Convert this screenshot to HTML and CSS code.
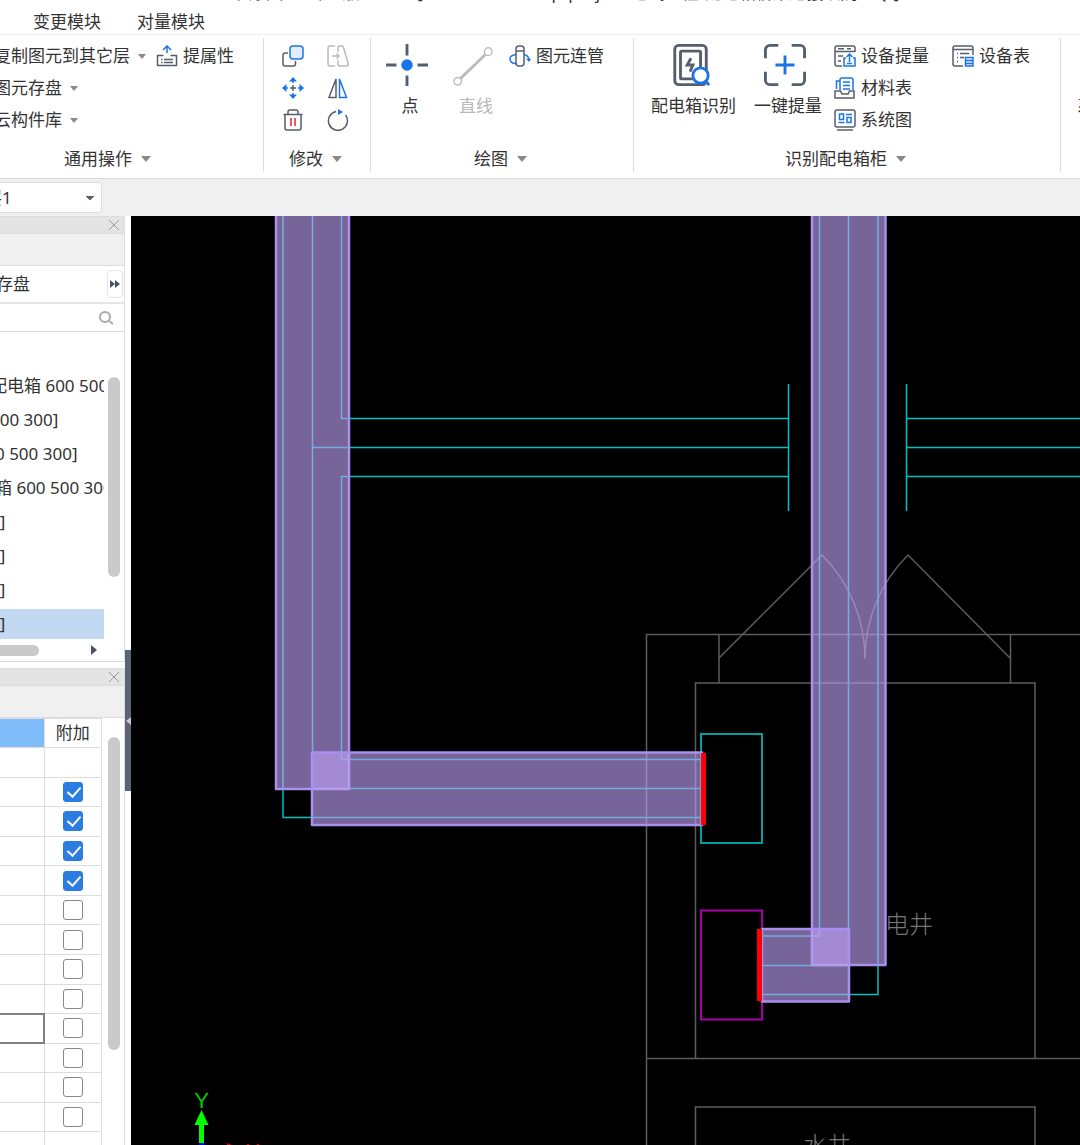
FILE: index.html
```html
<!DOCTYPE html>
<html lang="zh-CN">
  <head>
    <meta charset="UTF-8" />
    <meta name="viewport" content="width=device-width, initial-scale=1.0" />
    <title>安装计量</title>
    <link rel="stylesheet" href="styles.css">
  </head>
  <body>
    <header class="menubar">
      <div class="window-title">安装计量 专业版 2021 - [C:\Users\Desktop\project\电气工程\配电箱桥架连接识别.GQI]</div>
      <nav class="menu">
        <button>变更模块</button>
        <button>对量模块</button>
      </nav>
    </header>

    <div class="ribbon">
      <section class="group group-common">
        <div class="tools">
          <div class="tool-col col-cut">
            <button class="tool">复制图元到其它层<i class="caret"></i></button>
            <button class="tool">图元存盘<i class="caret"></i></button>
            <button class="tool">云构件库<i class="caret"></i></button>
          </div>
          <div class="tool-col">
            <button class="tool">
              <svg class="icon" viewBox="0 0 22 22">
                <path class="ink" d="M7.500 10.500H1.500v10h19v-10h-6M5 14.500h1.500M5 17.500h1.500M8 14.500h9M8 17.500h9" />
                <path class="blue" d="M11 8V1.500M7 5 11 1l4 4" />
              </svg>
              提属性
            </button>
          </div>
        </div>
        <button class="group-name">通用操作<i class="caret big"></i></button>
      </section>

      <section class="group group-edit">
        <div class="tools edit-grid">
          <button class="tool" aria-label="复制">
            <svg class="icon" viewBox="0 0 22 22">
              <path class="ink" d="M6 8H3a2 2 0 0 0-2 2v9a2 2 0 0 0 2 2h8.500a2 2 0 0 0 2-2v-3" />
              <rect class="blue soft" x="8" y="1" width="13" height="13" rx="3" />
            </svg>
          </button>
          <button class="tool" aria-label="延伸">
            <svg class="icon" viewBox="0 0 22 22">
              <path class="dim" d="M8 1H3a2 2 0 0 0-2 2v16a2 2 0 0 0 2 2h5M5 11h7M9.500 8.500 12 11l-2.500 2.500M11 7V3a2 2 0 0 1 2-2h1.500a2 2 0 0 1 2 1.500L21 18a2 2 0 0 1-2 3h-6a2 2 0 0 1-2-2v-4" />
            </svg>
          </button>
          <button class="tool" aria-label="移动">
            <svg class="icon" viewBox="0 0 22 22">
              <path class="ink" d="M11 8v6M8 11h6" />
              <path class="blue" d="M11 1.500V6M11 16v4.500M1.500 11H6M16 11h4.500" />
              <path class="blue fill" d="M11 0 7 4.500h8zM11 22l-4-4.500h8zM0 11l4.500-4v8zM22 11l-4.500-4v8z" />
            </svg>
          </button>
          <button class="tool" aria-label="镜像">
            <svg class="icon" viewBox="0 0 22 22">
              <path class="ink" d="M9 2v18.500H2z" />
              <path class="blue" d="M12.500 2v18.500h7z" />
            </svg>
          </button>
          <button class="tool" aria-label="删除">
            <svg class="icon" viewBox="0 0 22 22">
              <path class="ink" d="M1.500 5.500h19M3 6v13a2 2 0 0 0 2 2h12a2 2 0 0 0 2-2V6M6 5V3a2 2 0 0 1 2-2h6a2 2 0 0 1 2 2v2" />
              <path class="red" d="M9 9v8M13 9v8" />
            </svg>
          </button>
          <button class="tool" aria-label="旋转">
            <svg class="icon" viewBox="0 0 22 22">
              <path class="ink" d="M9 2.500A9.500 9.500 0 1 0 18.500 6" />
              <path class="blue fill" d="M11 0l5 3-5 3z" />
            </svg>
          </button>
        </div>
        <button class="group-name">修改<i class="caret big"></i></button>
      </section>

      <section class="group group-draw">
        <div class="tools">
          <button class="tool-big">
            <svg class="icon-big" viewBox="0 0 44 44">
              <path class="ink thick" d="M22 0v12M22 33v11M0 22h11M33 22h11" />
              <circle cx="22" cy="22" r="6" fill="#1b74e8" />
            </svg>
            点
          </button>
          <button class="tool-big" disabled>
            <svg class="icon-big" viewBox="0 0 44 44">
              <path class="dim thick" d="M9 36 35 11" />
              <circle class="dim" cx="6" cy="39" r="4" />
              <circle class="dim" cx="38" cy="8" r="4" />
            </svg>
            直线
          </button>
          <div class="tool-col">
            <button class="tool">
              <svg class="icon" viewBox="0 0 22 22">
                <path class="blue" d="M7 9.500C3 10 1 11.500 1 14s2 5 7 4.500M15 9.500c3 .5 4.500 2 5 5" />
                <path class="blue fill" d="M17 13.500l5 .5-2 3z" />
                <rect class="ink paper" x="7" y="1" width="8" height="20" rx="3" />
                <path class="ink" d="M7 6h8" />
              </svg>
              图元连管
            </button>
          </div>
        </div>
        <button class="group-name">绘图<i class="caret big"></i></button>
      </section>

      <section class="group group-detect">
        <div class="tools">
          <button class="tool-big">
            <svg class="icon-big" viewBox="0 0 44 44">
              <rect class="ink thick" x="5" y="1.500" width="33" height="41" rx="4" />
              <rect class="ink thick" x="11" y="7.500" width="21" height="29" rx="1" />
              <path class="ink thick" d="m22 15-4 7h6l-3 7" />
              <circle class="blue thick paper" cx="32" cy="33" r="8" />
              <path class="blue thick" d="m37 38 4 5" />
            </svg>
            配电箱识别
          </button>
          <button class="tool-big">
            <svg class="icon-big" viewBox="0 0 44 44">
              <path class="ink thick" d="M1.500 15V6A4.500 4.500 0 0 1 6 1.500h9M29 1.500h9A4.500 4.500 0 0 1 42.500 6v9M42.500 29v9a4.500 4.500 0 0 1-4.500 4.500h-9M15 42.500H6A4.500 4.500 0 0 1 1.500 38v-9" />
              <path class="blue thick" d="M22 12v20M12 22h20" />
            </svg>
            一键提量
          </button>
          <div class="tool-col">
            <button class="tool">
              <svg class="icon" viewBox="0 0 22 22">
                <path class="ink" d="M8 21H3a2 2 0 0 1-2-2V3a2 2 0 0 1 2-2h16a2 2 0 0 1 2 2v4M1 6.500h20M4 3.800h6M13 3.800h4M4 11h5M4 16h3" />
                <path class="blue" d="M12 13h-2v8h11v-8h-2M15.500 17V9M12.500 12l3-3 3 3M13 18.500h5" />
              </svg>
              设备提量
            </button>
            <button class="tool">
              <svg class="icon" viewBox="0 0 22 22">
                <path class="blue" d="M2.500 12V4H6M6 13V3a2 2 0 0 1 2-2h9a2 2 0 0 1 2 2v10M9 5h7M9 8.500h7M9 12h7" />
                <path class="ink" d="M1 14h5.500l1.500 3h6l1.500-3H20v7H1z" />
              </svg>
              材料表
            </button>
            <button class="tool">
              <svg class="icon" viewBox="0 0 22 22">
                <rect class="ink" x="1" y="1" width="20" height="17" rx="2" />
                <path class="ink" d="M3 21h16" />
                <path class="blue" d="M5.500 5h4v5.500h-4zM13 8.500h4v5h-4zM4.500 13.500h6M12 5.500h6" />
              </svg>
              系统图
            </button>
          </div>
          <div class="tool-col">
            <button class="tool">
              <svg class="icon" viewBox="0 0 22 22">
                <path class="ink" d="M11 21H3a2 2 0 0 1-2-2V3a2 2 0 0 1 2-2h16a2 2 0 0 1 2 2v7M1 4.500h20M5 8.500h1M8 8.500h9M5 12.500h1M8 12.500h4M5 16.500h1" />
                <path class="blue soft" d="M13.500 12.500h7.500v8.500h-7.500zM13.500 15.500h7M13.500 18.500h7" />
              </svg>
              设备表
            </button>
          </div>
        </div>
        <button class="group-name">识别配电箱柜<i class="caret big"></i></button>
      </section>

      <section class="group group-next">
        <div class="tools">
          <button class="tool-big">
            <svg class="icon-big" viewBox="0 0 44 44"></svg>
            系统
          </button>
        </div>
      </section>
    </div>

    <div class="floorbar">
      <select class="floor" aria-label="楼层">
        <option>层1</option>
      </select>
    </div>

    <main class="workspace">
      <aside class="side">
        <section class="panel panel-parts">
          <div class="panel-head"><button class="close" aria-label="关闭">
            <svg viewBox="0 0 10 10"><path d="M0 0l10 10M10 0 0 10" /></svg>
          </button></div>
          <div class="panel-tabs"></div>
          <div class="panel-tools">
            <button class="save">存盘</button>
            <button class="more" aria-label="更多">
              <svg viewBox="0 0 10 8"><path d="M0 0l5 4-5 4zM5 0l5 4-5 4z" /></svg>
            </button>
          </div>
          <div class="search">
            <input type="text" aria-label="搜索" />
            <svg viewBox="0 0 14 14"><circle cx="6" cy="6" r="5" /><path d="m10 10 4 3" /></svg>
          </div>
          <div class="list-area">
            <ul class="list">
              <li>配电箱 600 500 300]</li>
              <li>500 300]</li>
              <li class="near">0 500 300]</li>
              <li class="near">箱 600 500 300]</li>
              <li>0]</li>
              <li>0]</li>
              <li>0]</li>
              <li class="selected">0]</li>
            </ul>
            <div class="list-scroll"><div class="thumb"></div></div>
          </div>
          <div class="h-scroll">
            <div class="h-thumb"></div>
            <i class="h-arrow"></i>
          </div>
        </section>

        <section class="panel panel-props">
          <div class="panel-head"><button class="close" aria-label="关闭">
            <svg viewBox="0 0 10 10"><path d="M0 0l10 10M10 0 0 10" /></svg>
          </button></div>
          <div class="panel-tabs"></div>
          <div class="props-body">
            <table class="props">
              <thead>
                <tr><th class="value-head"></th><th>附加</th></tr>
              </thead>
              <tbody>
                <tr><td></td><td></td></tr>
                <tr><td></td><td><input type="checkbox" aria-label="附加 1" checked /></td></tr>
                <tr><td></td><td><input type="checkbox" aria-label="附加 2" checked /></td></tr>
                <tr><td></td><td><input type="checkbox" aria-label="附加 3" checked /></td></tr>
                <tr><td></td><td><input type="checkbox" aria-label="附加 4" checked /></td></tr>
                <tr><td></td><td><input type="checkbox" aria-label="附加 5" /></td></tr>
                <tr><td></td><td><input type="checkbox" aria-label="附加 6" /></td></tr>
                <tr><td></td><td><input type="checkbox" aria-label="附加 7" /></td></tr>
                <tr><td></td><td><input type="checkbox" aria-label="附加 8" /></td></tr>
                <tr><td class="editing"></td><td><input type="checkbox" aria-label="附加 9" /></td></tr>
                <tr><td></td><td><input type="checkbox" aria-label="附加 10" /></td></tr>
                <tr><td></td><td><input type="checkbox" aria-label="附加 11" /></td></tr>
                <tr><td></td><td><input type="checkbox" aria-label="附加 12" /></td></tr>
                <tr><td></td><td></td></tr>
              </tbody>
            </table>
            <div class="props-scroll"><div class="thumb"></div></div>
          </div>
        </section>
      </aside>

      <div class="splitter"><button class="collapse" aria-label="收起"></button></div>

      <div class="canvas">
        <svg class="drawing">
          <g transform="translate(-131 -216)">
            <!-- walls and door -->
            <g class="wall">
              <path d="M3000 634.500H646.500V1200M646 1058.500H3000" />
              <path d="M695.500 1058V683H1035v375M695.500 1200V1107H1035v93" />
              <path d="M719 634v49M1010.500 634v49" />
              <path d="M719 658 822 555A146 146 0 0 1 865 659A146 146 0 0 1 908 555L1010 658" />
            </g>
            <text class="room" x="885" y="933">电井</text>
            <text class="room" x="803" y="1154">水井</text>

            <!-- cable trays -->
            <g class="tray-line">
              <path d="M283 200v617.500H702" />
              <path d="M312.500 200v588.500H702" />
              <path d="M341.500 200v218.500H788M341.500 759.500v-283H788M341.500 759.500H702M312.500 447.500H788" />
              <path d="M788.500 384v127M906.500 384v127M906 418.500h2000M906 447.500h2000M906 476.500h2000" />
              <path d="M819.500 200v736H762M848.500 200v765.500H762M878 200v794.500H762" />
            </g>
            <rect class="box" x="701" y="734" width="61" height="109" />
            <rect class="box magenta" x="701" y="910.500" width="61" height="109" />

            <!-- pipes over the trays -->
            <g class="pipe">
              <rect x="276" y="150" width="73" height="639" />
              <rect x="312" y="752.500" width="390" height="72.500" />
              <rect x="812" y="150" width="73.500" height="815" />
              <rect x="762" y="929" width="87" height="72.500" />
            </g>
            <rect x="701" y="753" width="5" height="72" fill="#f00" />
            <rect x="757" y="929" width="5" height="72" fill="#f00" />

            <!-- axes -->
            <text class="axis-y" x="201.500" y="1108">Y</text>
            <path d="M201.500 1110l7 15h-4.500v18h-5v-18h-4.500z" fill="#0f0" />
            <path d="M198 1145l2-2h4l2 2z" fill="#00c" />
            <path d="M227 1143l5 2h-5z" fill="#d00" />
            <text class="axis-x" x="252.500" y="1159">X</text>
          </g>
        </svg>
      </div>
    </main>
  </body>
</html>
```

FILE: styles.css
```css
* {
  box-sizing: border-box;
}
body {
  margin: 0;
  height: 100vh;
  display: flex;
  flex-direction: column;
  overflow: hidden;
  background: #f0f0f0;
  color: #333;
  font-family: "Noto Sans", "Noto Sans CJK SC", sans-serif;
  font-size: 17px;
  line-height: 24px;
}
button {
  padding: 0;
  border: none;
  background: none;
  color: inherit;
  font: inherit;
  white-space: nowrap;
}

/* title and menu */
.menubar {
  position: relative;
  flex: none;
  height: 35px;
  overflow: hidden;
  background: #fff;
  border-bottom: 1px solid #eee;
}
.window-title {
  position: absolute;
  top: -19px;
  left: 236px;
  white-space: nowrap;
}
.menu {
  display: flex;
  gap: 36px;
  padding: 10px 0 0 33px;
}

/* ribbon */
.ribbon {
  flex: none;
  display: flex;
  height: 144px;
  overflow: hidden;
  background: #fff;
  border-bottom: 1px solid #d8d8d8;
}
.group {
  position: relative;
  flex: none;
  display: flex;
  flex-direction: column;
  justify-content: space-between;
  padding: 5px 0 7px;
}
.group::after {
  content: "";
  position: absolute;
  top: 3px;
  right: 0;
  bottom: 6px;
  width: 1px;
  background: #dcdcdc;
}
.group-common {
  width: 264px;
}
.group-edit {
  width: 107px;
}
.group-draw {
  width: 263px;
}
.group-detect {
  width: 427px;
}
.group-next {
  flex: 1;
}
.tools {
  display: flex;
  align-items: flex-start;
}
.tool-col {
  display: flex;
  flex-direction: column;
  align-items: flex-start;
}
.tool {
  display: flex;
  align-items: center;
  gap: 5px;
  height: 32px;
}
.col-cut {
  margin-left: -6px;
  margin-right: 10px;
}
.group-name {
  display: flex;
  align-items: center;
  justify-content: center;
  gap: 9px;
  padding-right: 4px;
}
.group-common .group-name {
  padding-right: 49px;
}
.caret {
  width: 0;
  height: 0;
  margin: 0 0 0 3px;
  border: 4px solid transparent;
  border-top: 5px solid #888;
  border-bottom: none;
}
.caret.big {
  margin: 0;
  border-width: 6px 5px 0;
}
.edit-grid {
  display: grid;
  grid-template-columns: 45px 45px;
  padding-left: 18px;
}
.group-draw .tools {
  padding-left: 6px;
}
.group-detect .tools {
  padding-left: 17px;
}
.group-next .tools {
  padding-left: 8px;
}
.tool-big {
  display: flex;
  flex-direction: column;
  align-items: center;
  gap: 8px;
  padding-top: 4px;
}
.group-draw .tool-big {
  width: 66px;
}
.tool-big:disabled {
  color: #b8b8b8;
}
.group-detect .tool-big {
  margin-right: 18px;
}
.group-detect .tool-big + .tool-col {
  margin-left: -6px;
  margin-right: 23px;
}
.icon {
  flex: none;
  width: 22px;
  height: 22px;
}
.icon-big {
  width: 44px;
  height: 42px;
  margin-right: 6px;
}
.ink,
.blue,
.dim,
.red {
  fill: none;
  stroke: #565e6e;
  stroke-width: 1.5;
}
.blue {
  stroke: #1b74e8;
}
.blue.fill {
  fill: #1b74e8;
  stroke: none;
}
.soft {
  fill: #e1eefc;
}
.paper {
  fill: #fff;
}
.dim {
  stroke: #bbb;
}
.red {
  stroke: #d9272e;
}
.thick {
  stroke-width: 3;
}

/* floor picker */
.floorbar {
  flex: none;
  height: 37px;
  padding-top: 3px;
}
.floor {
  appearance: none;
  width: 122px;
  height: 31px;
  margin-left: -20px;
  padding: 0 0 0 4px;
  border: 1px solid #ddd;
  border-radius: 4px;
  background: conic-gradient(from -45deg at 50% 100%, #5a6374 90deg, transparent 0) no-repeat right 7px center / 8px 4px, #fff;
  color: #333;
  font: inherit;
}

/* left panels */
.workspace {
  flex: 1;
  display: flex;
  min-height: 0;
}
.side {
  flex: none;
  width: 125px;
  display: flex;
  flex-direction: column;
  gap: 6px;
  background: #fff;
}
.panel {
  border-right: 1px solid #ddd;
  background: #fff;
  overflow: hidden;
}
.panel-parts {
  flex: none;
  border-bottom: 1px solid #ddd;
}
.panel-props {
  flex: 1;
}
.panel-head {
  display: flex;
  align-items: center;
  justify-content: flex-end;
  height: 18px;
  padding-right: 5px;
  background: #e4e4e4;
  border-top: 1px solid #ddd;
  border-bottom: 1px solid #ddd;
}
.close {
  display: flex;
}
.close svg {
  width: 10px;
  height: 10px;
  stroke: #999;
  fill: none;
}
.panel-tabs {
  height: 32px;
  background: #f0f0f0;
  border-bottom: 1px solid #ddd;
}
.panel-tools {
  display: flex;
  justify-content: space-between;
  align-items: center;
  height: 38px;
  padding-right: 1px;
  border-bottom: 2px solid #e4e4e4;
}
.save {
  margin-left: -4px;
}
.more {
  display: flex;
  align-items: center;
  justify-content: center;
  width: 16px;
  height: 28px;
  border: 1px solid #e4e4e4;
  border-radius: 4px;
}
.more svg {
  width: 10px;
  height: 8px;
  fill: #4a5264;
}
.search {
  display: flex;
  align-items: center;
  height: 28px;
  padding-right: 11px;
  border-bottom: 1px solid #ddd;
}
.search input {
  flex: 1;
  min-width: 0;
  border: none;
  outline: none;
}
.search svg {
  width: 14px;
  height: 14px;
  fill: none;
  stroke: #aaa;
  stroke-width: 2;
}
.list-area {
  display: flex;
  padding-top: 39px;
}
.list {
  width: 104px;
  margin: 0;
  padding: 0;
  list-style: none;
  overflow: hidden;
}
.list li {
  height: 30px;
  margin-bottom: 4px;
  line-height: 30px;
  text-indent: -10px;
  white-space: nowrap;
}
.list li.near {
  text-indent: -5px;
}
.list li.selected {
  margin-bottom: 0;
  background: #c2d9f1;
}
.list-scroll {
  padding: 6px 0 0 4px;
}
.thumb {
  width: 12px;
  border-radius: 6px;
  background: #cacaca;
}
.list-scroll .thumb {
  height: 200px;
}
.h-scroll {
  display: flex;
  align-items: center;
  justify-content: space-between;
  height: 22px;
  padding-right: 27px;
}
.h-thumb {
  width: 39px;
  height: 11px;
  border-radius: 0 6px 6px 0;
  background: #cacaca;
}
.h-arrow {
  border: 5px solid transparent;
  border-left: 6px solid #4a5264;
  border-right: none;
}
.props-body {
  display: flex;
}
.props {
  width: 102px;
  height: 444px;
  border-collapse: collapse;
  table-layout: fixed;
}
.props tr {
  height: 29px;
}
.props th,
.props td {
  padding: 0;
  border: 1px solid #ddd;
  border-left: none;
  text-align: center;
  font-weight: normal;
  line-height: 20px;
}
.props th:first-child {
  width: 44px;
}
.props .value-head {
  background: #80bcfa;
}
.props .editing {
  border: 2px solid #808080;
  border-left: none;
}
.props input {
  appearance: none;
  display: block;
  width: 20px;
  height: 20px;
  margin: 0 auto;
  border: 1px solid #888;
  border-radius: 3px;
  background: #fff;
}
.props input:checked {
  border-color: #2b7de1;
  background: #2b7de1;
}
.props input:checked::before {
  content: "";
  display: block;
  width: 6px;
  height: 11px;
  margin: 1px 0 0 6px;
  border: solid #fff;
  border-width: 0 2px 2px 0;
  transform: rotate(42deg);
}
.props-scroll {
  padding: 19px 0 0 6px;
}
.props-scroll .thumb {
  height: 313px;
}
.splitter {
  flex: none;
  width: 6px;
  padding-top: 434px;
  background: #fff;
}
.collapse {
  display: flex;
  align-items: center;
  justify-content: flex-end;
  width: 6px;
  height: 141px;
  background: #5b6472;
}
.collapse::before {
  content: "";
  border: 4px solid transparent;
  border-right: 5px solid #ccc;
  border-left: none;
}

/* drawing area */
.canvas {
  flex: 1;
  min-width: 0;
  background: #000;
}
.drawing {
  display: block;
  width: 100%;
  height: 100%;
}
.wall {
  fill: none;
  stroke: #5c5c5c;
  stroke-width: 1.5;
}
.room {
  fill: #777;
  font-family: "Noto Sans CJK SC", sans-serif;
  font-size: 24px;
  font-weight: 300;
}
.tray-line {
  fill: none;
  stroke: #00c0c0;
  stroke-width: 1.5;
}
.box {
  fill: none;
  stroke: #00a0a0;
  stroke-width: 2;
}
.box.magenta {
  stroke: #a800a8;
}
.pipe rect {
  fill: rgba(189, 160, 244, 0.63);
  stroke: #a98fee;
  stroke-width: 2.5;
  stroke-linejoin: round;
}
.axis-y,
.axis-x {
  font-family: "Liberation Sans", sans-serif;
  font-size: 22px;
  text-anchor: middle;
}
.axis-y {
  fill: #0c0;
}
.axis-x {
  fill: #d00;
}
```
